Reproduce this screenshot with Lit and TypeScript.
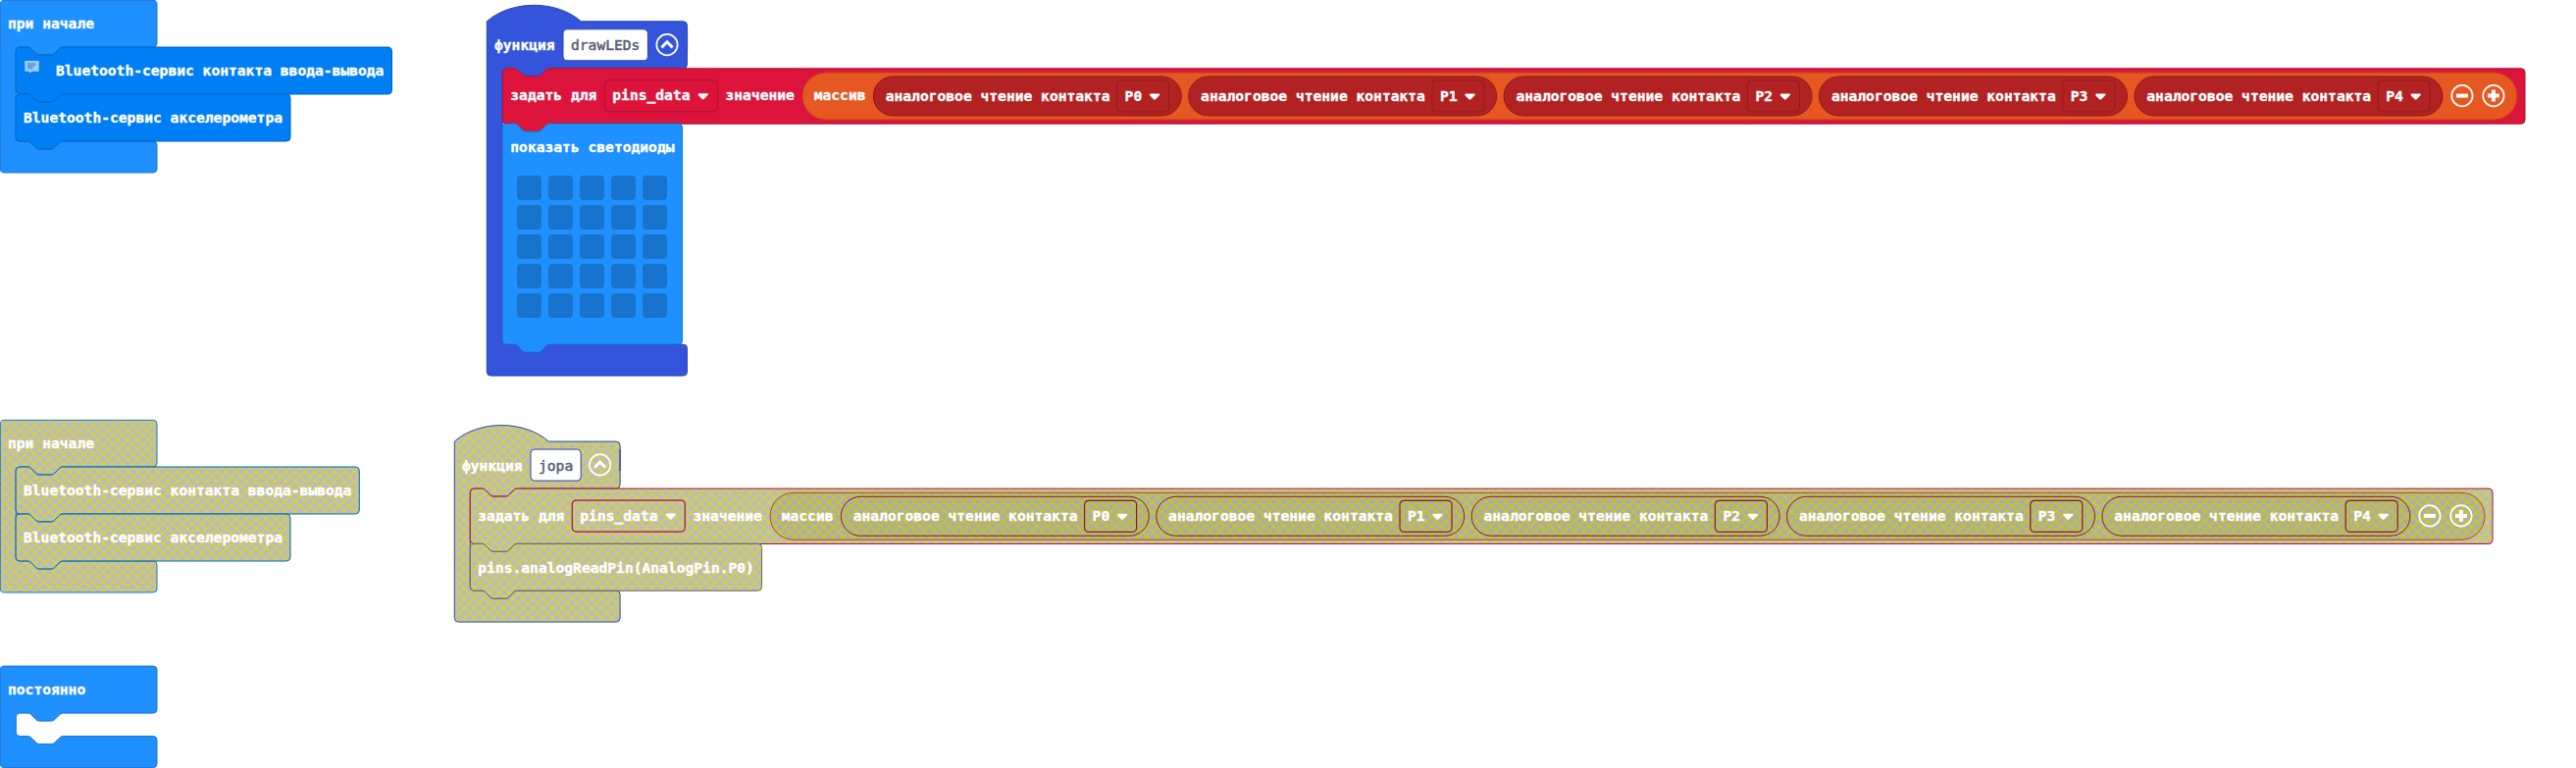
import { LitElement, html, svg, css } from "lit";
import { customElement } from "lit/decorators.js";

const CHAR = 8.8;
const NOTCH =
  "c 2,0 3,1 4,2 l 4,4 c 1,1 2,2 4,2 h 12 c 2,0 3,-1 4,-2 l 4,-4 c 1,-1 2,-2 4,-2";
const NOTCH_BACK =
  "c -2,0 -3,1 -4,2 l -4,4 c -1,1 -2,2 -4,2 h -12 c -2,0 -3,-1 -4,-2 l -4,-4 c -1,-1 -2,-2 -4,-2";

const statement = (w: number, h: number) =>
  `M 0,4 A 4,4 0 0,1 4,0 H 12 ${NOTCH} H ${w - 4} a 4,4 0 0,1 4,4 V ${h - 4}` +
  ` a 4,4 0 0,1 -4,4 H 48 ${NOTCH_BACK} H 4 a 4,4 0 0,1 -4,-4 z`;

const container = (w: number, head: number, body: number, hat: boolean) =>
  (hat ? "M 0,0 c 25,-22 71,-22 96,0" : "M 0,4 A 4,4 0 0,1 4,0") +
  ` H ${w - 4} a 4,4 0 0,1 4,4 V ${head - 4} a 4,4 0 0,1 -4,4 H 64 ${NOTCH_BACK}` +
  ` H 20 a 4,4 0 0,0 -4,4 v ${body - 8} a 4,4 0 0,0 4,4 H 28 ${NOTCH} H ${w - 4}` +
  ` a 4,4 0 0,1 4,4 v 24 a 4,4 0 0,1 -4,4 H 4 a 4,4 0 0,1 -4,-4 z`;

const pill = (w: number, h: number) =>
  `M ${h / 2},0 H ${w - h / 2} a ${h / 2},${h / 2} 0 0,1 0,${h} H ${h / 2} a ${h / 2},${h / 2} 0 0,1 0,${-h} z`;

const at = (x: number, y: number, content: unknown) =>
  svg`<g transform="translate(${x},${y})">${content}</g>`;

const shape = (kind: string, d: string, off: boolean) =>
  svg`<path class="block ${kind} ${off ? "off" : ""}" d=${d}></path>`;

const label = (x: number, y: number, text: string, cls = "") =>
  svg`<text class="label ${cls}" x=${x} y=${y} textLength=${text.length * CHAR}>${text}</text>`;

const dropdown = (x: number, y: number, w: number, text: string, kind: string, off: boolean) =>
  at(x, y, svg`
    <rect class="field ${kind} ${off ? "off" : ""}" width=${w} height="32" rx="4"></rect>
    ${label(8, 20.7, text)}
    <path class="glyph" d="M ${w - 19.6},14.7 q 0,-1.2 1.2,-1.2 h 8 q 1.6,0 .9,1.4 l -4.1,4.3 q -1,.9 -2,0 l -3.7,-3.8 z"></path>`);

const ring = (x: number, y: number, sign: "up" | "minus" | "plus") =>
  at(x, y, svg`
    <circle class="ring" r="10.7"></circle>
    ${sign === "up"
      ? svg`<path class="chevron" d="M -5.6,2.8 L 0,-2.8 L 5.6,2.8"></path>`
      : svg`<path class="sign" d=${sign === "plus" ? "M -6,0 H 6 M 0,-6 V 6" : "M -6,0 H 6"}></path>`}`);

const pinReader = (pin: string, off: boolean) => svg`
  ${shape("pin", pill(314, 40), off)}
  ${label(12.4, 24.5, "аналоговое чтение контакта")}
  ${dropdown(248.3, 4, 53, pin, "pin", off)}`;

const assignment = (off: boolean) => svg`
  ${shape("variable", statement(2061.7, 56.4), off)}
  ${label(8, 32.5, "задать для")}
  ${dropdown(104, 12, 115, "pins_data", "variable", off)}
  ${label(227.2, 32.5, "значение")}
  ${at(305.7, 4.2, svg`
    ${shape("array", pill(1748, 48), off)}
    ${label(11.7, 28.3, "массив")}
    ${["P0", "P1", "P2", "P3", "P4"].map((pin, i) => at(72.3 + i * 321.4, 4, pinReader(pin, off)))}
    ${ring(1691.9, 23.6, "minus")}
    ${ring(1723.9, 23.6, "plus")}`)}`;

const simple = (kind: string, w: number, text: string, off: boolean) => svg`
  ${shape(kind, statement(w, 48), off)}
  ${label(8, 29.3, text)}`;

const functionHead = (w: number, body: number, name: string, off: boolean) => svg`
  ${shape("func", container(w, 48, body, true), off)}
  <path class="edge" d="M ${w},8 v 22"></path>
  ${label(7.7, 29.5, "функция")}
  <rect class="name-box ${off ? "off" : ""}" x="77.7" y="8" width=${name.length * CHAR + 16} height="32" rx="4"></rect>
  ${label(85.7, 29.5, name, "name")}
  ${ring(w - 20.5, 23.8, "up")}`;

const leds = svg`
  ${shape("basic", statement(183.3, 225), false)}
  ${label(8, 29.3, "показать светодиоды")}
  ${[0, 1, 2, 3, 4].map((row) =>
    [0, 1, 2, 3, 4].map((col) => svg`
      <rect class="led" x=${14.7 + col * 32} y=${53 + row * 30} width="25" height="25" rx="4"></rect>`))}`;

const comment = svg`
  <path class="bubble" d="M 9.3,14 H 23.7 V 24.7 H 17 L 14.7,26.3 L 12.7,24.7 H 9.3 z"></path>
  <path class="bubble-ink" d="M 12,16 H 20 V 19.5 H 17.7 V 22.3 H 12 z"></path>`;

@customElement("app-root")
export class AppRoot extends LitElement {
  static styles = css`
    :host { display: block; width: 2626px; height: 783px; overflow: hidden; background: #fff; }
    .canvas { display: block; }
    .block { stroke-width: 1; }
    .label {
      font: 700 14.6px "DejaVu Sans Mono", monospace;
      fill: #fff;
      stroke: #fff;
      stroke-width: 0.35px;
      white-space: pre;
    }
    .label.name { fill: #575e75; font-weight: 400; stroke: #575e75; stroke-width: 0.5px; }
    .basic { fill: #1e90ff; stroke: #1873cc; }
    .bluetooth { fill: #007ef4; stroke: #0065c3; }
    .func { fill: #3455db; stroke: #2a44af; }
    .variable { fill: #dc143c; stroke: #b01030; }
    .array { fill: #e65722; stroke: #b8461b; }
    .pin { fill: #b22222; stroke: #8e1b1b; }
    .raw { stroke: #666; }
    .off { fill: url(#disabled); fill-opacity: 0.8; }
    .field { fill: none; }
    .field.off { fill: none; stroke-width: 1.2; }
    .name-box { fill: #fff; stroke: #2a44af; stroke-width: 1; }
    .name-box.off { fill: #fff; fill-opacity: 1; }
    .edge { stroke: #2a44af; stroke-width: 1.2; }
    .glyph { fill: #fff; }
    .ring { fill: none; stroke: #fff; stroke-width: 1.7; }
    .chevron { fill: none; stroke: #fff; stroke-width: 3; }
    .sign { fill: none; stroke: #fff; stroke-width: 4; }
    .led { fill: #1873cc; }
    .bubble { fill: #99cdfd; }
    .bubble-ink { fill: #6a9fdb; }
    .hatch-base { fill: #aaa; }
    .hatch-line { stroke: #cc0; stroke-width: 1.25; stroke-linecap: square; }
  `;

  render() {
    return html`
      <svg class="canvas" width="2626" height="783" viewBox="0 0 2626 783">
        <defs>
          <pattern id="disabled" patternUnits="userSpaceOnUse" width="10" height="10">
            <rect class="hatch-base" width="10" height="10"></rect>
            <path class="hatch-line" d="M 0 0 L 10 10 M 10 0 L 0 10"></path>
          </pattern>
        </defs>
        ${at(0.3, 0.3, svg`
          ${shape("basic", container(159.7, 47.7, 96, false), false)}
          ${label(7.7, 29, "при начале")}
          ${at(15.7, 47.7, svg`
            ${shape("bluetooth", statement(383.5, 48), false)}
            ${comment}
            ${label(41, 29.3, "Bluetooth-сервис контакта ввода-вывода")}`)}
          ${at(15.7, 95.7, simple("bluetooth", 280, "Bluetooth-сервис акселерометра", false))}`)}
        ${at(496.3, 21.8, svg`
          ${functionHead(204.2, 281.3, "drawLEDs", false)}
          ${at(16, 48, assignment(false))}
          ${at(16, 104.3, leds)}`)}
        ${at(0.3, 428.3, svg`
          ${shape("basic", container(159.7, 47.7, 96, false), true)}
          ${label(7.7, 29, "при начале")}
          ${at(15.7, 47.7, simple("bluetooth", 350.3, "Bluetooth-сервис контакта ввода-вывода", true))}
          ${at(15.7, 95.7, simple("bluetooth", 280, "Bluetooth-сервис акселерометра", true))}`)}
        ${at(463.3, 450.1, svg`
          ${functionHead(168.8, 104, "jopa", true)}
          ${at(16, 48, assignment(true))}
          ${at(16, 104.2, simple("raw", 297.3, "pins.analogReadPin(AnalogPin.P0)", true))}`)}
        ${at(0.3, 679.1, svg`
          ${shape("basic", container(159.7, 48, 23.5, false), false)}
          ${label(7.7, 29, "постоянно")}`)}
      </svg>`;
  }
}
